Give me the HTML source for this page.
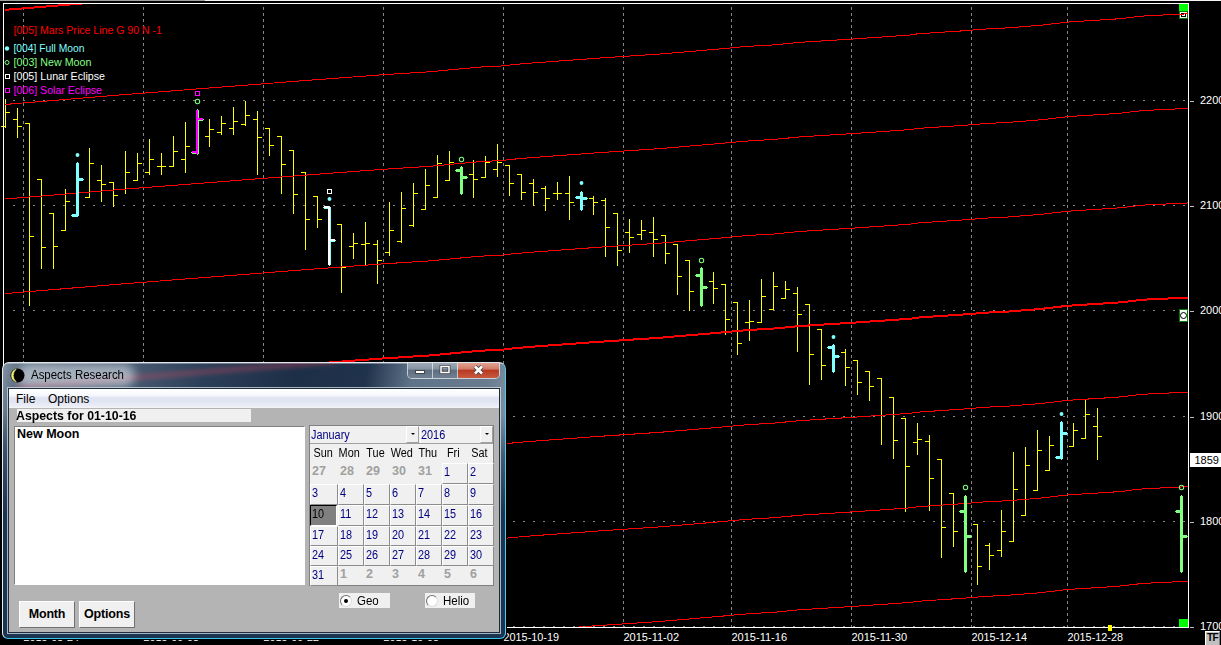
<!DOCTYPE html>
<html lang="en"><head><meta charset="utf-8"><title>Aspects Research</title>
<style>
html,body{margin:0;padding:0;background:#000;}
body{width:1221px;height:645px;overflow:hidden;position:relative;font-family:"Liberation Sans",sans-serif;}
#chart{position:absolute;left:0;top:0;}
#chart text.ax{font-family:"Liberation Sans",sans-serif;font-size:11px;fill:#fff;}
#tf{position:absolute;left:1205px;top:631px;width:15px;height:14px;background:#c0c0c0;box-sizing:border-box;border-top:1px solid #fff;border-left:1px solid #fff;border-right:1px solid #808080;font-size:10px;font-weight:bold;line-height:12px;color:#000;text-align:center;letter-spacing:-.6px;}
#win{position:absolute;left:2px;top:362px;width:504px;height:277px;box-sizing:border-box;border-radius:7px 7px 6px 6px;
 border:1px solid;border-color:#dfe6ee #55c8ee #35c6f2 #e8eef4;
 background:linear-gradient(180deg,rgba(27,52,80,0) 50px,rgba(27,52,80,.55) 90px,rgba(27,52,80,1) 150px),linear-gradient(100deg,#8595a6 0px,#5d6f83 14px,#4a5d74 120px,#2b3f58 200px,#1d2f47 290px,#20334c 360px,#5f7388 405px,#687b8f 480px,#8090a2 504px);overflow:hidden;box-shadow:1px 1px 0 #000;}
#win:before{content:"";position:absolute;left:0;top:0;right:0;height:1px;background:rgba(255,255,255,.35);}
#redglow{position:absolute;left:14px;top:22px;width:320px;height:4px;background:rgba(200,70,95,.5);filter:blur(2.5px);transform:rotate(-4.6deg);transform-origin:0 50%;}
#glow{position:absolute;left:14px;top:1px;width:118px;height:23px;border-radius:12px;background:rgba(235,240,246,.55);filter:blur(5px);}
#title{position:absolute;left:27.5px;top:5px;font-size:12px;line-height:15px;color:#000;white-space:nowrap;transform:scaleX(.955);transform-origin:0 0;}
#ico{position:absolute;left:7px;top:5px;width:15px;height:15px;}
#btns{position:absolute;left:404px;top:-1px;width:93px;height:17px;border:1px solid rgba(255,255,255,.65);border-top:none;border-radius:0 0 5px 5px;box-sizing:border-box;overflow:hidden;display:flex;}
#btns div{height:100%;box-sizing:border-box;position:relative;}
#bmin,#bmax{width:25px;background:linear-gradient(#a3adb8 0,#8592a1 45%,#5d6e80 50%,#6f8092 100%);border-right:1px solid rgba(255,255,255,.6);}
#bcls{width:42px;background:linear-gradient(#e3a898 0,#d27a68 45%,#b8381f 50%,#c65a40 100%);}
#client{position:absolute;left:5px;top:25px;width:492px;height:245px;background:#b4b4b4;border:1px solid #1f2c3a;box-sizing:border-box;box-shadow:0 0 0 1px rgba(214,224,234,.75);}
#client>div,#cal>div,.dh,.dc{position:absolute;}
#menu{left:0;top:0;width:490px;height:18px;background:linear-gradient(#ffffff 0,#f6f8fc 35%,#dfe3f1 50%,#e3e7f3 75%,#eef0f8 100%);border-bottom:1px solid #f4f4f4;font-size:12px;line-height:20px;color:#000;}
#menu span{position:absolute;top:0;}
.msb{font-weight:bold;font-size:12.5px;color:#000;white-space:nowrap;}
#lbl{background:#f0f0f0;line-height:15px;}
#lbl b{transform:scaleX(.985);transform-origin:0 0;left:-1px !important;}
#lbl b,#list b{position:absolute;left:0;top:0;}
#list{background:#fff;box-sizing:border-box;border:1px solid;border-color:#808080 #fff #fff #808080;line-height:13px;}
#cal{background:#f0f0f0;box-sizing:border-box;border:1px solid #808080;}
.ms b{font-weight:normal;display:inline-block;transform:scaleX(.87);transform-origin:0 0;white-space:nowrap;}
.ms{font-size:12.5px;}
.cb{background:#f0f0f0;line-height:19px;color:#000080;box-sizing:border-box;}
.dd{box-sizing:border-box;border:1px solid;border-color:#fff #a0a0a0 #a0a0a0 #fff;background:#f0f0f0;}
.dd:after{content:"";position:absolute;left:4px;top:6px;border:2px solid transparent;border-top:2px solid #000;border-bottom:none;}
.dh{line-height:18px;color:#000;text-align:center;}
.dh b{transform-origin:50% 0 !important;}
.dc{box-sizing:border-box;line-height:17px;padding-left:1px;color:#000080;}
.dc.n{border:1px solid;border-color:#fff #8c8c8c #8c8c8c #fff;}
.dc.g{color:#a0a0a0;line-height:17px;padding-left:2px;}
.dc.g b{font-weight:bold;transform:none;letter-spacing:0px;}
.dc.s{background:#808080;color:#000;border:1px solid;border-color:#000 #fff #fff #000;}
.rb{background:#f0f0f0;line-height:17px;color:#000;}
.rb b{transform:scaleX(.92) !important;}
.rb i{position:absolute;left:1px;top:2px;width:12px;height:12px;border-radius:50%;background:#fff;box-sizing:border-box;border:1px solid;border-color:#707070 #dcdcdc #dcdcdc #707070;}
.rb i.on:after{content:"";position:absolute;left:3px;top:3px;width:4px;height:4px;border-radius:50%;background:#000;}
.rb b{position:absolute;left:18px;top:0;}
.btn{letter-spacing:-.2px;box-sizing:border-box;background:#f0f0f0;border:1px solid;border-color:#fff #707070 #707070 #fff;line-height:24px;text-align:center;}
</style></head><body>
<svg id="chart" width="1221" height="645" viewBox="0 0 1221 645" shape-rendering="crispEdges"><defs><clipPath id="cp"><rect x="4" y="4" width="1184" height="623"/></clipPath></defs><rect x="0" y="0" width="1221" height="645" fill="#000"/><rect x="0" y="0" width="205" height="1" fill="#a0a0a0"/><rect x="205" y="0" width="1016" height="1" fill="#f4f4f4"/><g clip-path="url(#cp)"><path d="M13 100.5H1188" stroke="#868686" stroke-width="1" stroke-dasharray="2 8" fill="none"/><path d="M13 205.5H1188" stroke="#868686" stroke-width="1" stroke-dasharray="2 8" fill="none"/><path d="M13 310.5H1188" stroke="#868686" stroke-width="1" stroke-dasharray="2 8" fill="none"/><path d="M13 416.5H1188" stroke="#868686" stroke-width="1" stroke-dasharray="2 8" fill="none"/><path d="M13 521.5H1188" stroke="#868686" stroke-width="1" stroke-dasharray="2 8" fill="none"/><path d="M13 626.5H1188" stroke="#868686" stroke-width="1" stroke-dasharray="2 8" fill="none"/><path d="M23.5 7V627" stroke="#868686" stroke-width="1" stroke-dasharray="3 3" fill="none"/><path d="M143.5 7V627" stroke="#868686" stroke-width="1" stroke-dasharray="3 3" fill="none"/><path d="M263.5 7V627" stroke="#868686" stroke-width="1" stroke-dasharray="3 3" fill="none"/><path d="M383.5 7V627" stroke="#868686" stroke-width="1" stroke-dasharray="3 3" fill="none"/><path d="M503.5 7V627" stroke="#868686" stroke-width="1" stroke-dasharray="3 3" fill="none"/><path d="M623.5 7V627" stroke="#868686" stroke-width="1" stroke-dasharray="3 3" fill="none"/><path d="M731.5 7V627" stroke="#868686" stroke-width="1" stroke-dasharray="3 3" fill="none"/><path d="M851.5 7V627" stroke="#868686" stroke-width="1" stroke-dasharray="3 3" fill="none"/><path d="M971.5 7V627" stroke="#868686" stroke-width="1" stroke-dasharray="3 3" fill="none"/><path d="M1067.5 7V627" stroke="#868686" stroke-width="1" stroke-dasharray="3 3" fill="none"/></g><g clip-path="url(#cp)"><rect x="5" y="99" width="1" height="29" fill="#ffff00"/><rect x="1" y="126" width="4" height="1" fill="#ffff00"/><rect x="6" y="112" width="4" height="1" fill="#ffff00"/><rect x="17" y="108" width="1" height="30" fill="#ffff00"/><rect x="13" y="119" width="4" height="1" fill="#ffff00"/><rect x="18" y="126" width="4" height="1" fill="#ffff00"/><rect x="29" y="123" width="1" height="183" fill="#ffff00"/><rect x="25" y="123" width="4" height="1" fill="#ffff00"/><rect x="30" y="236" width="4" height="1" fill="#ffff00"/><rect x="41" y="179" width="1" height="90" fill="#ffff00"/><rect x="37" y="179" width="4" height="1" fill="#ffff00"/><rect x="42" y="247" width="4" height="1" fill="#ffff00"/><rect x="53" y="213" width="1" height="56" fill="#ffff00"/><rect x="49" y="213" width="4" height="1" fill="#ffff00"/><rect x="54" y="246" width="4" height="1" fill="#ffff00"/><rect x="65" y="189" width="1" height="42" fill="#ffff00"/><rect x="61" y="230" width="4" height="1" fill="#ffff00"/><rect x="66" y="201" width="4" height="1" fill="#ffff00"/><rect x="89" y="148" width="1" height="50" fill="#ffff00"/><rect x="85" y="197" width="4" height="1" fill="#ffff00"/><rect x="90" y="163" width="4" height="1" fill="#ffff00"/><rect x="101" y="165" width="1" height="37" fill="#ffff00"/><rect x="97" y="180" width="4" height="1" fill="#ffff00"/><rect x="102" y="184" width="4" height="1" fill="#ffff00"/><rect x="113" y="182" width="1" height="25" fill="#ffff00"/><rect x="109" y="182" width="4" height="1" fill="#ffff00"/><rect x="114" y="195" width="4" height="1" fill="#ffff00"/><rect x="125" y="151" width="1" height="43" fill="#ffff00"/><rect x="121" y="189" width="4" height="1" fill="#ffff00"/><rect x="126" y="172" width="4" height="1" fill="#ffff00"/><rect x="137" y="153" width="1" height="28" fill="#ffff00"/><rect x="133" y="180" width="4" height="1" fill="#ffff00"/><rect x="138" y="163" width="4" height="1" fill="#ffff00"/><rect x="149" y="139" width="1" height="36" fill="#ffff00"/><rect x="145" y="172" width="4" height="1" fill="#ffff00"/><rect x="150" y="159" width="4" height="1" fill="#ffff00"/><rect x="161" y="153" width="1" height="22" fill="#ffff00"/><rect x="157" y="166" width="4" height="1" fill="#ffff00"/><rect x="162" y="166" width="4" height="1" fill="#ffff00"/><rect x="173" y="136" width="1" height="31" fill="#ffff00"/><rect x="169" y="166" width="4" height="1" fill="#ffff00"/><rect x="174" y="151" width="4" height="1" fill="#ffff00"/><rect x="185" y="122" width="1" height="51" fill="#ffff00"/><rect x="181" y="159" width="4" height="1" fill="#ffff00"/><rect x="186" y="146" width="4" height="1" fill="#ffff00"/><rect x="209" y="119" width="1" height="28" fill="#ffff00"/><rect x="205" y="136" width="4" height="1" fill="#ffff00"/><rect x="210" y="129" width="4" height="1" fill="#ffff00"/><rect x="221" y="116" width="1" height="19" fill="#ffff00"/><rect x="217" y="132" width="4" height="1" fill="#ffff00"/><rect x="222" y="123" width="4" height="1" fill="#ffff00"/><rect x="233" y="107" width="1" height="28" fill="#ffff00"/><rect x="229" y="128" width="4" height="1" fill="#ffff00"/><rect x="234" y="121" width="4" height="1" fill="#ffff00"/><rect x="245" y="101" width="1" height="25" fill="#ffff00"/><rect x="241" y="124" width="4" height="1" fill="#ffff00"/><rect x="246" y="115" width="4" height="1" fill="#ffff00"/><rect x="257" y="111" width="1" height="64" fill="#ffff00"/><rect x="253" y="119" width="4" height="1" fill="#ffff00"/><rect x="258" y="137" width="4" height="1" fill="#ffff00"/><rect x="269" y="128" width="1" height="28" fill="#ffff00"/><rect x="265" y="128" width="4" height="1" fill="#ffff00"/><rect x="270" y="145" width="4" height="1" fill="#ffff00"/><rect x="281" y="136" width="1" height="58" fill="#ffff00"/><rect x="277" y="136" width="4" height="1" fill="#ffff00"/><rect x="282" y="164" width="4" height="1" fill="#ffff00"/><rect x="293" y="150" width="1" height="64" fill="#ffff00"/><rect x="289" y="150" width="4" height="1" fill="#ffff00"/><rect x="294" y="194" width="4" height="1" fill="#ffff00"/><rect x="305" y="172" width="1" height="78" fill="#ffff00"/><rect x="301" y="172" width="4" height="1" fill="#ffff00"/><rect x="306" y="219" width="4" height="1" fill="#ffff00"/><rect x="317" y="196" width="1" height="32" fill="#ffff00"/><rect x="313" y="196" width="4" height="1" fill="#ffff00"/><rect x="318" y="219" width="4" height="1" fill="#ffff00"/><rect x="341" y="224" width="1" height="69" fill="#ffff00"/><rect x="337" y="224" width="4" height="1" fill="#ffff00"/><rect x="342" y="267" width="4" height="1" fill="#ffff00"/><rect x="353" y="233" width="1" height="26" fill="#ffff00"/><rect x="349" y="246" width="4" height="1" fill="#ffff00"/><rect x="354" y="243" width="4" height="1" fill="#ffff00"/><rect x="365" y="222" width="1" height="44" fill="#ffff00"/><rect x="361" y="244" width="4" height="1" fill="#ffff00"/><rect x="366" y="243" width="4" height="1" fill="#ffff00"/><rect x="377" y="240" width="1" height="44" fill="#ffff00"/><rect x="373" y="244" width="4" height="1" fill="#ffff00"/><rect x="378" y="260" width="4" height="1" fill="#ffff00"/><rect x="389" y="202" width="1" height="54" fill="#ffff00"/><rect x="385" y="252" width="4" height="1" fill="#ffff00"/><rect x="390" y="230" width="4" height="1" fill="#ffff00"/><rect x="401" y="192" width="1" height="51" fill="#ffff00"/><rect x="397" y="241" width="4" height="1" fill="#ffff00"/><rect x="402" y="208" width="4" height="1" fill="#ffff00"/><rect x="413" y="183" width="1" height="44" fill="#ffff00"/><rect x="409" y="225" width="4" height="1" fill="#ffff00"/><rect x="414" y="193" width="4" height="1" fill="#ffff00"/><rect x="425" y="169" width="1" height="41" fill="#ffff00"/><rect x="421" y="209" width="4" height="1" fill="#ffff00"/><rect x="426" y="185" width="4" height="1" fill="#ffff00"/><rect x="437" y="155" width="1" height="43" fill="#ffff00"/><rect x="433" y="197" width="4" height="1" fill="#ffff00"/><rect x="438" y="163" width="4" height="1" fill="#ffff00"/><rect x="449" y="151" width="1" height="30" fill="#ffff00"/><rect x="445" y="180" width="4" height="1" fill="#ffff00"/><rect x="450" y="162" width="4" height="1" fill="#ffff00"/><rect x="473" y="160" width="1" height="38" fill="#ffff00"/><rect x="469" y="174" width="4" height="1" fill="#ffff00"/><rect x="474" y="179" width="4" height="1" fill="#ffff00"/><rect x="485" y="156" width="1" height="22" fill="#ffff00"/><rect x="481" y="177" width="4" height="1" fill="#ffff00"/><rect x="486" y="162" width="4" height="1" fill="#ffff00"/><rect x="497" y="144" width="1" height="33" fill="#ffff00"/><rect x="493" y="169" width="4" height="1" fill="#ffff00"/><rect x="498" y="162" width="4" height="1" fill="#ffff00"/><rect x="509" y="165" width="1" height="31" fill="#ffff00"/><rect x="505" y="165" width="4" height="1" fill="#ffff00"/><rect x="510" y="183" width="4" height="1" fill="#ffff00"/><rect x="521" y="174" width="1" height="26" fill="#ffff00"/><rect x="517" y="174" width="4" height="1" fill="#ffff00"/><rect x="522" y="192" width="4" height="1" fill="#ffff00"/><rect x="533" y="179" width="1" height="27" fill="#ffff00"/><rect x="529" y="183" width="4" height="1" fill="#ffff00"/><rect x="534" y="192" width="4" height="1" fill="#ffff00"/><rect x="545" y="186" width="1" height="25" fill="#ffff00"/><rect x="541" y="188" width="4" height="1" fill="#ffff00"/><rect x="546" y="198" width="4" height="1" fill="#ffff00"/><rect x="557" y="182" width="1" height="18" fill="#ffff00"/><rect x="553" y="193" width="4" height="1" fill="#ffff00"/><rect x="558" y="193" width="4" height="1" fill="#ffff00"/><rect x="569" y="176" width="1" height="44" fill="#ffff00"/><rect x="565" y="193" width="4" height="1" fill="#ffff00"/><rect x="570" y="202" width="4" height="1" fill="#ffff00"/><rect x="593" y="196" width="1" height="19" fill="#ffff00"/><rect x="589" y="198" width="4" height="1" fill="#ffff00"/><rect x="594" y="202" width="4" height="1" fill="#ffff00"/><rect x="605" y="198" width="1" height="59" fill="#ffff00"/><rect x="601" y="200" width="4" height="1" fill="#ffff00"/><rect x="606" y="227" width="4" height="1" fill="#ffff00"/><rect x="617" y="213" width="1" height="53" fill="#ffff00"/><rect x="613" y="213" width="4" height="1" fill="#ffff00"/><rect x="618" y="250" width="4" height="1" fill="#ffff00"/><rect x="629" y="219" width="1" height="34" fill="#ffff00"/><rect x="625" y="232" width="4" height="1" fill="#ffff00"/><rect x="630" y="237" width="4" height="1" fill="#ffff00"/><rect x="641" y="220" width="1" height="20" fill="#ffff00"/><rect x="637" y="234" width="4" height="1" fill="#ffff00"/><rect x="642" y="230" width="4" height="1" fill="#ffff00"/><rect x="653" y="217" width="1" height="40" fill="#ffff00"/><rect x="649" y="232" width="4" height="1" fill="#ffff00"/><rect x="654" y="239" width="4" height="1" fill="#ffff00"/><rect x="665" y="235" width="1" height="29" fill="#ffff00"/><rect x="661" y="235" width="4" height="1" fill="#ffff00"/><rect x="666" y="253" width="4" height="1" fill="#ffff00"/><rect x="677" y="244" width="1" height="51" fill="#ffff00"/><rect x="673" y="244" width="4" height="1" fill="#ffff00"/><rect x="678" y="276" width="4" height="1" fill="#ffff00"/><rect x="689" y="260" width="1" height="51" fill="#ffff00"/><rect x="685" y="260" width="4" height="1" fill="#ffff00"/><rect x="690" y="291" width="4" height="1" fill="#ffff00"/><rect x="713" y="272" width="1" height="32" fill="#ffff00"/><rect x="709" y="281" width="4" height="1" fill="#ffff00"/><rect x="714" y="288" width="4" height="1" fill="#ffff00"/><rect x="725" y="284" width="1" height="51" fill="#ffff00"/><rect x="721" y="284" width="4" height="1" fill="#ffff00"/><rect x="726" y="319" width="4" height="1" fill="#ffff00"/><rect x="737" y="302" width="1" height="53" fill="#ffff00"/><rect x="733" y="302" width="4" height="1" fill="#ffff00"/><rect x="738" y="343" width="4" height="1" fill="#ffff00"/><rect x="749" y="300" width="1" height="41" fill="#ffff00"/><rect x="745" y="322" width="4" height="1" fill="#ffff00"/><rect x="750" y="321" width="4" height="1" fill="#ffff00"/><rect x="761" y="279" width="1" height="44" fill="#ffff00"/><rect x="757" y="322" width="4" height="1" fill="#ffff00"/><rect x="762" y="296" width="4" height="1" fill="#ffff00"/><rect x="773" y="272" width="1" height="38" fill="#ffff00"/><rect x="769" y="309" width="4" height="1" fill="#ffff00"/><rect x="774" y="286" width="4" height="1" fill="#ffff00"/><rect x="785" y="281" width="1" height="18" fill="#ffff00"/><rect x="781" y="298" width="4" height="1" fill="#ffff00"/><rect x="786" y="289" width="4" height="1" fill="#ffff00"/><rect x="797" y="287" width="1" height="65" fill="#ffff00"/><rect x="793" y="293" width="4" height="1" fill="#ffff00"/><rect x="798" y="314" width="4" height="1" fill="#ffff00"/><rect x="809" y="304" width="1" height="81" fill="#ffff00"/><rect x="805" y="304" width="4" height="1" fill="#ffff00"/><rect x="810" y="354" width="4" height="1" fill="#ffff00"/><rect x="821" y="329" width="1" height="51" fill="#ffff00"/><rect x="817" y="329" width="4" height="1" fill="#ffff00"/><rect x="822" y="365" width="4" height="1" fill="#ffff00"/><rect x="845" y="349" width="1" height="37" fill="#ffff00"/><rect x="841" y="352" width="4" height="1" fill="#ffff00"/><rect x="846" y="367" width="4" height="1" fill="#ffff00"/><rect x="857" y="360" width="1" height="35" fill="#ffff00"/><rect x="853" y="360" width="4" height="1" fill="#ffff00"/><rect x="858" y="382" width="4" height="1" fill="#ffff00"/><rect x="869" y="371" width="1" height="30" fill="#ffff00"/><rect x="865" y="371" width="4" height="1" fill="#ffff00"/><rect x="870" y="386" width="4" height="1" fill="#ffff00"/><rect x="881" y="378" width="1" height="67" fill="#ffff00"/><rect x="877" y="378" width="4" height="1" fill="#ffff00"/><rect x="882" y="415" width="4" height="1" fill="#ffff00"/><rect x="893" y="397" width="1" height="62" fill="#ffff00"/><rect x="889" y="397" width="4" height="1" fill="#ffff00"/><rect x="894" y="440" width="4" height="1" fill="#ffff00"/><rect x="905" y="418" width="1" height="94" fill="#ffff00"/><rect x="901" y="418" width="4" height="1" fill="#ffff00"/><rect x="906" y="466" width="4" height="1" fill="#ffff00"/><rect x="917" y="423" width="1" height="32" fill="#ffff00"/><rect x="913" y="442" width="4" height="1" fill="#ffff00"/><rect x="918" y="439" width="4" height="1" fill="#ffff00"/><rect x="929" y="435" width="1" height="76" fill="#ffff00"/><rect x="925" y="441" width="4" height="1" fill="#ffff00"/><rect x="930" y="478" width="4" height="1" fill="#ffff00"/><rect x="941" y="459" width="1" height="99" fill="#ffff00"/><rect x="937" y="459" width="4" height="1" fill="#ffff00"/><rect x="942" y="527" width="4" height="1" fill="#ffff00"/><rect x="953" y="493" width="1" height="54" fill="#ffff00"/><rect x="949" y="493" width="4" height="1" fill="#ffff00"/><rect x="954" y="531" width="4" height="1" fill="#ffff00"/><rect x="977" y="524" width="1" height="61" fill="#ffff00"/><rect x="973" y="524" width="4" height="1" fill="#ffff00"/><rect x="978" y="566" width="4" height="1" fill="#ffff00"/><rect x="989" y="543" width="1" height="27" fill="#ffff00"/><rect x="985" y="545" width="4" height="1" fill="#ffff00"/><rect x="990" y="555" width="4" height="1" fill="#ffff00"/><rect x="1001" y="510" width="1" height="47" fill="#ffff00"/><rect x="997" y="550" width="4" height="1" fill="#ffff00"/><rect x="1002" y="531" width="4" height="1" fill="#ffff00"/><rect x="1013" y="452" width="1" height="90" fill="#ffff00"/><rect x="1009" y="541" width="4" height="1" fill="#ffff00"/><rect x="1014" y="489" width="4" height="1" fill="#ffff00"/><rect x="1025" y="447" width="1" height="69" fill="#ffff00"/><rect x="1021" y="515" width="4" height="1" fill="#ffff00"/><rect x="1026" y="465" width="4" height="1" fill="#ffff00"/><rect x="1037" y="430" width="1" height="61" fill="#ffff00"/><rect x="1033" y="490" width="4" height="1" fill="#ffff00"/><rect x="1038" y="450" width="4" height="1" fill="#ffff00"/><rect x="1049" y="436" width="1" height="35" fill="#ffff00"/><rect x="1045" y="470" width="4" height="1" fill="#ffff00"/><rect x="1050" y="445" width="4" height="1" fill="#ffff00"/><rect x="1073" y="423" width="1" height="24" fill="#ffff00"/><rect x="1069" y="446" width="4" height="1" fill="#ffff00"/><rect x="1074" y="430" width="4" height="1" fill="#ffff00"/><rect x="1085" y="399" width="1" height="40" fill="#ffff00"/><rect x="1081" y="438" width="4" height="1" fill="#ffff00"/><rect x="1086" y="414" width="4" height="1" fill="#ffff00"/><rect x="1097" y="408" width="1" height="52" fill="#ffff00"/><rect x="1093" y="426" width="4" height="1" fill="#ffff00"/><rect x="1098" y="436" width="4" height="1" fill="#ffff00"/></g><rect x="1" y="126" width="4" height="1" fill="#ffff00"/><rect x="1179" y="4" width="9" height="7" fill="#00ff00"/><rect x="1179" y="11" width="9" height="8" fill="#008000"/><rect x="1180" y="12" width="7" height="6" fill="#fff"/><rect x="1181" y="13" width="5" height="4" fill="#000"/><rect x="1182" y="14" width="3" height="2" fill="#fff"/><g clip-path="url(#cp)"><path d="M5 9.81 L11 9.40 L17 8.90 L23 8.40 L29 7.90 L35 7.41 L41 6.91 L47 6.41 L53 5.91 L59 5.42 L65 4.92 L71 4.42 L77 3.92 L83 3.43 L89 2.93 L95 2.43 L101 1.94 L107 1.44 L113 0.94 L119 0.44 L125 -0.03 L131 -0.49 L137 -0.96 L143 -1.42 L149 -1.89 L155 -2.35 L161 -2.82 L167 -3.28 L173 -3.75 L179 -4.21 L185 -4.68 L191 -5.14 L197 -5.61 L203 -6.07 L209 -6.54 L215 -7.00 L221 -7.47 L227 -7.93 L233 -8.40 L239 -8.86 L245 -9.33 L251 -9.80 L257 -10.27 L263 -10.74 L269 -11.21 L275 -11.68 L281 -12.15 L287 -12.62 L293 -13.09 L299 -13.56 L305 -14.01 L311 -14.46 L317 -14.91 L323 -15.36 L329 -15.81 L335 -16.25 L341 -16.70 L347 -17.15 L353 -17.60 L359 -18.05 L365 -18.50 L371 -18.94 L377 -19.39 L383 -19.84 L389 -20.22 L395 -20.61 L401 -20.99 L407 -21.37 L413 -21.75 L419 -22.14 L425 -22.52 L431 -22.93 L437 -23.50 L443 -24.06 L449 -24.63 L455 -25.19 L461 -25.75 L467 -26.32 L473 -26.88 L479 -27.45 L485 -27.78 L491 -28.07 L497 -28.35 L503 -28.64 L509 -29.50 L515 -30.09 L521 -30.64 L527 -31.14 L533 -31.64 L539 -32.08 L545 -32.52 L551 -32.96 L557 -33.40 L563 -33.83 L569 -34.27 L575 -34.71 L581 -35.15 L587 -35.59 L593 -36.03 L599 -36.47 L605 -36.87 L611 -37.27 L617 -37.67 L623 -38.07 L629 -38.47 L635 -38.87 L641 -39.27 L647 -39.67 L653 -40.07 L659 -40.47 L665 -40.97 L671 -41.47 L677 -41.98 L683 -42.49 L689 -43.00 L695 -43.51 L701 -44.02 L707 -44.53 L713 -45.04 L719 -45.55 L725 -46.12 L731 -46.69 L737 -47.26 L743 -47.78 L749 -48.21 L755 -48.64 L761 -48.97 L767 -49.31 L773 -49.64 L779 -50.22 L785 -50.80 L791 -51.37 L797 -51.95 L803 -52.43 L809 -52.80 L815 -53.18 L821 -53.56 L827 -53.93 L833 -54.31 L839 -54.69 L845 -55.06 L851 -55.44 L857 -55.85 L863 -56.26 L869 -56.68 L875 -57.09 L881 -57.50 L887 -57.93 L893 -58.35 L899 -58.78 L905 -59.21 L911 -59.64 L917 -60.64 L923 -61.05 L929 -61.47 L935 -61.88 L941 -62.30 L947 -62.70 L953 -63.08 L959 -63.45 L965 -63.89 L971 -64.39 L977 -64.89 L983 -65.39 L989 -65.78 L995 -66.07 L1001 -66.35 L1007 -66.64 L1013 -67.11 L1019 -67.59 L1025 -68.06 L1031 -68.53 L1037 -69.00 L1043 -69.59 L1049 -70.30 L1055 -71.01 L1061 -71.71 L1067 -72.42 L1073 -72.86 L1079 -73.24 L1085 -73.62 L1091 -74.00 L1097 -74.37 L1103 -74.75 L1109 -75.13 L1115 -75.51 L1121 -76.04 L1127 -76.64 L1133 -77.50 L1139 -78.14 L1145 -78.69 L1151 -78.97 L1157 -79.26 L1163 -79.55 L1169 -79.83 L1175 -80.12 L1181 -80.41 L1187 -80.69 L1188 -80.74" fill="none" stroke="#ff0000" stroke-width="2"/><path d="M5 104.38 L11 103.97 L17 103.47 L23 102.97 L29 102.47 L35 101.98 L41 101.48 L47 100.98 L53 100.48 L59 99.99 L65 99.49 L71 98.99 L77 98.49 L83 98.00 L89 97.50 L95 97.00 L101 96.50 L107 96.01 L113 95.51 L119 95.01 L125 94.54 L131 94.08 L137 93.61 L143 93.15 L149 92.68 L155 92.22 L161 91.75 L167 91.29 L173 90.82 L179 90.36 L185 89.89 L191 89.43 L197 88.96 L203 88.50 L209 88.03 L215 87.57 L221 87.10 L227 86.64 L233 86.17 L239 85.71 L245 85.24 L251 84.77 L257 84.30 L263 83.83 L269 83.36 L275 82.89 L281 82.42 L287 81.95 L293 81.48 L299 81.01 L305 80.56 L311 80.11 L317 79.66 L323 79.21 L329 78.76 L335 78.32 L341 77.87 L347 77.42 L353 76.97 L359 76.52 L365 76.07 L371 75.63 L377 75.18 L383 74.73 L389 74.35 L395 73.96 L401 73.58 L407 73.20 L413 72.82 L419 72.43 L425 72.05 L431 71.64 L437 71.07 L443 70.51 L449 69.94 L455 69.38 L461 68.82 L467 68.25 L473 67.69 L479 67.12 L485 66.79 L491 66.50 L497 66.22 L503 65.93 L509 65.07 L515 64.48 L521 63.93 L527 63.43 L533 62.93 L539 62.49 L545 62.05 L551 61.61 L557 61.17 L563 60.74 L569 60.30 L575 59.86 L581 59.42 L587 58.98 L593 58.54 L599 58.10 L605 57.70 L611 57.30 L617 56.90 L623 56.50 L629 56.10 L635 55.70 L641 55.30 L647 54.90 L653 54.50 L659 54.10 L665 53.60 L671 53.09 L677 52.59 L683 52.08 L689 51.56 L695 51.06 L701 50.55 L707 50.03 L713 49.53 L719 49.02 L725 48.45 L731 47.88 L737 47.31 L743 46.79 L749 46.36 L755 45.93 L761 45.60 L767 45.26 L773 44.93 L779 44.35 L785 43.77 L791 43.20 L797 42.62 L803 42.14 L809 41.77 L815 41.39 L821 41.01 L827 40.64 L833 40.26 L839 39.88 L845 39.51 L851 39.13 L857 38.72 L863 38.31 L869 37.89 L875 37.48 L881 37.07 L887 36.64 L893 36.22 L899 35.79 L905 35.36 L911 34.93 L917 33.93 L923 33.52 L929 33.10 L935 32.69 L941 32.27 L947 31.87 L953 31.49 L959 31.12 L965 30.68 L971 30.18 L977 29.68 L983 29.18 L989 28.79 L995 28.50 L1001 28.22 L1007 27.93 L1013 27.46 L1019 26.98 L1025 26.51 L1031 26.04 L1037 25.57 L1043 24.98 L1049 24.27 L1055 23.56 L1061 22.86 L1067 22.15 L1073 21.71 L1079 21.33 L1085 20.95 L1091 20.57 L1097 20.20 L1103 19.82 L1109 19.44 L1115 19.06 L1121 18.53 L1127 17.93 L1133 17.07 L1139 16.43 L1145 15.88 L1151 15.60 L1157 15.31 L1163 15.02 L1169 14.74 L1175 14.45 L1181 14.16 L1187 13.88 L1188 13.83" fill="none" stroke="#ff0000" stroke-width="1"/><path d="M5 198.95 L11 198.54 L17 198.04 L23 197.54 L29 197.04 L35 196.55 L41 196.05 L47 195.55 L53 195.05 L59 194.56 L65 194.06 L71 193.56 L77 193.06 L83 192.57 L89 192.07 L95 191.57 L101 191.07 L107 190.58 L113 190.08 L119 189.58 L125 189.11 L131 188.65 L137 188.18 L143 187.72 L149 187.25 L155 186.79 L161 186.32 L167 185.86 L173 185.39 L179 184.93 L185 184.46 L191 184.00 L197 183.53 L203 183.07 L209 182.60 L215 182.14 L221 181.67 L227 181.21 L233 180.74 L239 180.28 L245 179.81 L251 179.34 L257 178.87 L263 178.40 L269 177.93 L275 177.46 L281 176.99 L287 176.52 L293 176.05 L299 175.58 L305 175.13 L311 174.68 L317 174.23 L323 173.78 L329 173.33 L335 172.89 L341 172.44 L347 171.99 L353 171.54 L359 171.09 L365 170.64 L371 170.20 L377 169.75 L383 169.30 L389 168.92 L395 168.53 L401 168.15 L407 167.77 L413 167.39 L419 167.00 L425 166.62 L431 166.21 L437 165.64 L443 165.08 L449 164.51 L455 163.95 L461 163.39 L467 162.82 L473 162.26 L479 161.69 L485 161.36 L491 161.07 L497 160.79 L503 160.50 L509 159.64 L515 159.05 L521 158.50 L527 158.00 L533 157.50 L539 157.06 L545 156.62 L551 156.18 L557 155.74 L563 155.31 L569 154.87 L575 154.43 L581 153.99 L587 153.55 L593 153.11 L599 152.67 L605 152.27 L611 151.87 L617 151.47 L623 151.07 L629 150.67 L635 150.27 L641 149.87 L647 149.47 L653 149.07 L659 148.67 L665 148.17 L671 147.66 L677 147.16 L683 146.65 L689 146.13 L695 145.62 L701 145.12 L707 144.60 L713 144.09 L719 143.59 L725 143.02 L731 142.45 L737 141.88 L743 141.36 L749 140.93 L755 140.50 L761 140.17 L767 139.83 L773 139.50 L779 138.92 L785 138.34 L791 137.77 L797 137.19 L803 136.71 L809 136.34 L815 135.96 L821 135.58 L827 135.21 L833 134.83 L839 134.45 L845 134.08 L851 133.70 L857 133.29 L863 132.88 L869 132.46 L875 132.05 L881 131.64 L887 131.21 L893 130.79 L899 130.36 L905 129.93 L911 129.50 L917 128.50 L923 128.09 L929 127.67 L935 127.26 L941 126.84 L947 126.44 L953 126.06 L959 125.69 L965 125.25 L971 124.75 L977 124.25 L983 123.75 L989 123.36 L995 123.07 L1001 122.79 L1007 122.50 L1013 122.03 L1019 121.55 L1025 121.08 L1031 120.61 L1037 120.14 L1043 119.55 L1049 118.84 L1055 118.13 L1061 117.42 L1067 116.72 L1073 116.28 L1079 115.90 L1085 115.52 L1091 115.14 L1097 114.77 L1103 114.39 L1109 114.01 L1115 113.63 L1121 113.10 L1127 112.50 L1133 111.64 L1139 111.00 L1145 110.45 L1151 110.17 L1157 109.88 L1163 109.59 L1169 109.31 L1175 109.02 L1181 108.73 L1187 108.45 L1188 108.40" fill="none" stroke="#ff0000" stroke-width="1"/><path d="M5 293.52 L11 293.11 L17 292.61 L23 292.11 L29 291.61 L35 291.12 L41 290.62 L47 290.12 L53 289.62 L59 289.13 L65 288.63 L71 288.13 L77 287.63 L83 287.14 L89 286.64 L95 286.14 L101 285.64 L107 285.15 L113 284.65 L119 284.15 L125 283.68 L131 283.22 L137 282.75 L143 282.29 L149 281.82 L155 281.36 L161 280.89 L167 280.43 L173 279.96 L179 279.50 L185 279.03 L191 278.57 L197 278.10 L203 277.64 L209 277.17 L215 276.71 L221 276.24 L227 275.78 L233 275.31 L239 274.85 L245 274.38 L251 273.91 L257 273.44 L263 272.97 L269 272.50 L275 272.03 L281 271.56 L287 271.09 L293 270.62 L299 270.15 L305 269.70 L311 269.25 L317 268.80 L323 268.35 L329 267.90 L335 267.46 L341 267.01 L347 266.56 L353 266.11 L359 265.66 L365 265.21 L371 264.77 L377 264.32 L383 263.87 L389 263.49 L395 263.10 L401 262.72 L407 262.34 L413 261.96 L419 261.57 L425 261.19 L431 260.78 L437 260.21 L443 259.65 L449 259.08 L455 258.52 L461 257.96 L467 257.39 L473 256.83 L479 256.26 L485 255.93 L491 255.64 L497 255.36 L503 255.07 L509 254.21 L515 253.62 L521 253.07 L527 252.57 L533 252.07 L539 251.63 L545 251.19 L551 250.75 L557 250.31 L563 249.88 L569 249.44 L575 249.00 L581 248.56 L587 248.12 L593 247.68 L599 247.24 L605 246.84 L611 246.44 L617 246.04 L623 245.64 L629 245.24 L635 244.84 L641 244.44 L647 244.04 L653 243.64 L659 243.24 L665 242.74 L671 242.23 L677 241.72 L683 241.22 L689 240.70 L695 240.19 L701 239.69 L707 239.17 L713 238.66 L719 238.16 L725 237.59 L731 237.02 L737 236.45 L743 235.93 L749 235.50 L755 235.07 L761 234.74 L767 234.40 L773 234.07 L779 233.49 L785 232.91 L791 232.34 L797 231.76 L803 231.28 L809 230.91 L815 230.53 L821 230.15 L827 229.78 L833 229.40 L839 229.02 L845 228.65 L851 228.27 L857 227.86 L863 227.44 L869 227.03 L875 226.62 L881 226.21 L887 225.78 L893 225.36 L899 224.93 L905 224.50 L911 224.07 L917 223.07 L923 222.66 L929 222.24 L935 221.83 L941 221.41 L947 221.01 L953 220.63 L959 220.26 L965 219.82 L971 219.32 L977 218.82 L983 218.32 L989 217.93 L995 217.64 L1001 217.36 L1007 217.07 L1013 216.60 L1019 216.12 L1025 215.65 L1031 215.18 L1037 214.71 L1043 214.12 L1049 213.41 L1055 212.70 L1061 212.00 L1067 211.29 L1073 210.85 L1079 210.47 L1085 210.09 L1091 209.71 L1097 209.34 L1103 208.96 L1109 208.58 L1115 208.20 L1121 207.67 L1127 207.07 L1133 206.21 L1139 205.57 L1145 205.02 L1151 204.74 L1157 204.45 L1163 204.16 L1169 203.88 L1175 203.59 L1181 203.30 L1187 203.02 L1188 202.97" fill="none" stroke="#ff0000" stroke-width="1"/><path d="M5 388.09 L11 387.68 L17 387.18 L23 386.68 L29 386.18 L35 385.69 L41 385.19 L47 384.69 L53 384.19 L59 383.70 L65 383.20 L71 382.70 L77 382.20 L83 381.71 L89 381.21 L95 380.71 L101 380.21 L107 379.72 L113 379.22 L119 378.72 L125 378.25 L131 377.79 L137 377.32 L143 376.86 L149 376.39 L155 375.93 L161 375.46 L167 375.00 L173 374.53 L179 374.07 L185 373.60 L191 373.14 L197 372.67 L203 372.21 L209 371.74 L215 371.28 L221 370.81 L227 370.35 L233 369.88 L239 369.42 L245 368.95 L251 368.48 L257 368.01 L263 367.54 L269 367.07 L275 366.60 L281 366.13 L287 365.66 L293 365.19 L299 364.72 L305 364.27 L311 363.82 L317 363.37 L323 362.92 L329 362.47 L335 362.03 L341 361.58 L347 361.13 L353 360.68 L359 360.23 L365 359.78 L371 359.34 L377 358.89 L383 358.44 L389 358.06 L395 357.67 L401 357.29 L407 356.91 L413 356.53 L419 356.14 L425 355.76 L431 355.35 L437 354.78 L443 354.22 L449 353.65 L455 353.09 L461 352.53 L467 351.96 L473 351.40 L479 350.83 L485 350.50 L491 350.21 L497 349.93 L503 349.64 L509 348.78 L515 348.19 L521 347.64 L527 347.14 L533 346.64 L539 346.20 L545 345.76 L551 345.32 L557 344.88 L563 344.45 L569 344.01 L575 343.57 L581 343.13 L587 342.69 L593 342.25 L599 341.81 L605 341.41 L611 341.01 L617 340.61 L623 340.21 L629 339.81 L635 339.41 L641 339.01 L647 338.61 L653 338.21 L659 337.81 L665 337.31 L671 336.80 L677 336.29 L683 335.78 L689 335.27 L695 334.76 L701 334.25 L707 333.75 L713 333.24 L719 332.73 L725 332.16 L731 331.59 L737 331.02 L743 330.50 L749 330.07 L755 329.64 L761 329.31 L767 328.97 L773 328.64 L779 328.06 L785 327.48 L791 326.91 L797 326.33 L803 325.85 L809 325.48 L815 325.10 L821 324.72 L827 324.35 L833 323.97 L839 323.59 L845 323.22 L851 322.84 L857 322.43 L863 322.01 L869 321.60 L875 321.19 L881 320.78 L887 320.35 L893 319.93 L899 319.50 L905 319.07 L911 318.64 L917 317.64 L923 317.23 L929 316.81 L935 316.40 L941 315.98 L947 315.58 L953 315.20 L959 314.83 L965 314.39 L971 313.89 L977 313.39 L983 312.89 L989 312.50 L995 312.21 L1001 311.93 L1007 311.64 L1013 311.17 L1019 310.69 L1025 310.22 L1031 309.75 L1037 309.28 L1043 308.69 L1049 307.98 L1055 307.27 L1061 306.56 L1067 305.86 L1073 305.42 L1079 305.04 L1085 304.66 L1091 304.28 L1097 303.91 L1103 303.53 L1109 303.15 L1115 302.77 L1121 302.24 L1127 301.64 L1133 300.78 L1139 300.14 L1145 299.59 L1151 299.31 L1157 299.02 L1163 298.73 L1169 298.45 L1175 298.16 L1181 297.87 L1187 297.59 L1188 297.54" fill="none" stroke="#ff0000" stroke-width="2"/><path d="M5 482.66 L11 482.25 L17 481.75 L23 481.25 L29 480.75 L35 480.26 L41 479.76 L47 479.26 L53 478.76 L59 478.27 L65 477.77 L71 477.27 L77 476.77 L83 476.28 L89 475.78 L95 475.28 L101 474.78 L107 474.29 L113 473.79 L119 473.29 L125 472.82 L131 472.36 L137 471.89 L143 471.43 L149 470.96 L155 470.50 L161 470.03 L167 469.57 L173 469.10 L179 468.64 L185 468.17 L191 467.71 L197 467.24 L203 466.78 L209 466.31 L215 465.85 L221 465.38 L227 464.92 L233 464.45 L239 463.99 L245 463.52 L251 463.05 L257 462.58 L263 462.11 L269 461.64 L275 461.17 L281 460.70 L287 460.23 L293 459.76 L299 459.29 L305 458.84 L311 458.39 L317 457.94 L323 457.49 L329 457.04 L335 456.60 L341 456.15 L347 455.70 L353 455.25 L359 454.80 L365 454.35 L371 453.91 L377 453.46 L383 453.01 L389 452.63 L395 452.24 L401 451.86 L407 451.48 L413 451.10 L419 450.71 L425 450.33 L431 449.92 L437 449.35 L443 448.79 L449 448.22 L455 447.66 L461 447.10 L467 446.53 L473 445.97 L479 445.40 L485 445.07 L491 444.78 L497 444.50 L503 444.21 L509 443.35 L515 442.76 L521 442.21 L527 441.71 L533 441.21 L539 440.77 L545 440.33 L551 439.89 L557 439.45 L563 439.02 L569 438.58 L575 438.14 L581 437.70 L587 437.26 L593 436.82 L599 436.38 L605 435.98 L611 435.58 L617 435.18 L623 434.78 L629 434.38 L635 433.98 L641 433.58 L647 433.18 L653 432.78 L659 432.38 L665 431.88 L671 431.38 L677 430.87 L683 430.36 L689 429.84 L695 429.33 L701 428.82 L707 428.31 L713 427.80 L719 427.29 L725 426.73 L731 426.16 L737 425.59 L743 425.07 L749 424.64 L755 424.21 L761 423.88 L767 423.54 L773 423.21 L779 422.63 L785 422.05 L791 421.48 L797 420.90 L803 420.42 L809 420.05 L815 419.67 L821 419.29 L827 418.92 L833 418.54 L839 418.16 L845 417.79 L851 417.41 L857 417.00 L863 416.58 L869 416.17 L875 415.76 L881 415.35 L887 414.92 L893 414.50 L899 414.07 L905 413.64 L911 413.21 L917 412.21 L923 411.80 L929 411.38 L935 410.97 L941 410.55 L947 410.15 L953 409.77 L959 409.40 L965 408.96 L971 408.46 L977 407.96 L983 407.46 L989 407.07 L995 406.78 L1001 406.50 L1007 406.21 L1013 405.74 L1019 405.26 L1025 404.79 L1031 404.32 L1037 403.85 L1043 403.26 L1049 402.55 L1055 401.84 L1061 401.13 L1067 400.43 L1073 399.99 L1079 399.61 L1085 399.23 L1091 398.85 L1097 398.48 L1103 398.10 L1109 397.72 L1115 397.34 L1121 396.81 L1127 396.21 L1133 395.35 L1139 394.71 L1145 394.16 L1151 393.88 L1157 393.59 L1163 393.30 L1169 393.02 L1175 392.73 L1181 392.44 L1187 392.16 L1188 392.11" fill="none" stroke="#ff0000" stroke-width="1"/><path d="M5 577.23 L11 576.82 L17 576.32 L23 575.82 L29 575.32 L35 574.83 L41 574.33 L47 573.83 L53 573.33 L59 572.84 L65 572.34 L71 571.84 L77 571.34 L83 570.85 L89 570.35 L95 569.85 L101 569.36 L107 568.86 L113 568.36 L119 567.86 L125 567.39 L131 566.93 L137 566.46 L143 566.00 L149 565.53 L155 565.07 L161 564.60 L167 564.14 L173 563.67 L179 563.21 L185 562.74 L191 562.28 L197 561.81 L203 561.35 L209 560.88 L215 560.42 L221 559.95 L227 559.49 L233 559.02 L239 558.56 L245 558.09 L251 557.62 L257 557.15 L263 556.68 L269 556.21 L275 555.74 L281 555.27 L287 554.80 L293 554.33 L299 553.86 L305 553.41 L311 552.96 L317 552.51 L323 552.06 L329 551.61 L335 551.17 L341 550.72 L347 550.27 L353 549.82 L359 549.37 L365 548.92 L371 548.48 L377 548.03 L383 547.58 L389 547.20 L395 546.81 L401 546.43 L407 546.05 L413 545.67 L419 545.28 L425 544.90 L431 544.49 L437 543.92 L443 543.36 L449 542.79 L455 542.23 L461 541.67 L467 541.10 L473 540.54 L479 539.97 L485 539.64 L491 539.35 L497 539.07 L503 538.78 L509 537.92 L515 537.33 L521 536.78 L527 536.28 L533 535.78 L539 535.34 L545 534.90 L551 534.46 L557 534.02 L563 533.59 L569 533.15 L575 532.71 L581 532.27 L587 531.83 L593 531.39 L599 530.95 L605 530.55 L611 530.15 L617 529.75 L623 529.35 L629 528.95 L635 528.55 L641 528.15 L647 527.75 L653 527.35 L659 526.95 L665 526.45 L671 525.94 L677 525.43 L683 524.92 L689 524.41 L695 523.90 L701 523.39 L707 522.88 L713 522.38 L719 521.87 L725 521.30 L731 520.73 L737 520.16 L743 519.64 L749 519.21 L755 518.78 L761 518.45 L767 518.11 L773 517.78 L779 517.20 L785 516.62 L791 516.05 L797 515.47 L803 514.99 L809 514.62 L815 514.24 L821 513.86 L827 513.49 L833 513.11 L839 512.73 L845 512.36 L851 511.98 L857 511.57 L863 511.15 L869 510.74 L875 510.33 L881 509.92 L887 509.49 L893 509.07 L899 508.64 L905 508.21 L911 507.78 L917 506.78 L923 506.37 L929 505.95 L935 505.54 L941 505.12 L947 504.72 L953 504.34 L959 503.97 L965 503.53 L971 503.03 L977 502.53 L983 502.03 L989 501.64 L995 501.35 L1001 501.07 L1007 500.78 L1013 500.31 L1019 499.83 L1025 499.36 L1031 498.89 L1037 498.42 L1043 497.83 L1049 497.12 L1055 496.41 L1061 495.70 L1067 495.00 L1073 494.56 L1079 494.18 L1085 493.80 L1091 493.42 L1097 493.05 L1103 492.67 L1109 492.29 L1115 491.91 L1121 491.38 L1127 490.78 L1133 489.92 L1139 489.28 L1145 488.73 L1151 488.45 L1157 488.16 L1163 487.87 L1169 487.59 L1175 487.30 L1181 487.01 L1187 486.73 L1188 486.68" fill="none" stroke="#ff0000" stroke-width="1"/><path d="M5 671.80 L11 671.39 L17 670.89 L23 670.39 L29 669.89 L35 669.40 L41 668.90 L47 668.40 L53 667.90 L59 667.41 L65 666.91 L71 666.41 L77 665.91 L83 665.42 L89 664.92 L95 664.42 L101 663.92 L107 663.43 L113 662.93 L119 662.43 L125 661.96 L131 661.50 L137 661.03 L143 660.57 L149 660.10 L155 659.64 L161 659.17 L167 658.71 L173 658.24 L179 657.78 L185 657.31 L191 656.85 L197 656.38 L203 655.92 L209 655.45 L215 654.99 L221 654.52 L227 654.06 L233 653.59 L239 653.13 L245 652.66 L251 652.19 L257 651.72 L263 651.25 L269 650.78 L275 650.31 L281 649.84 L287 649.37 L293 648.90 L299 648.43 L305 647.98 L311 647.53 L317 647.08 L323 646.63 L329 646.18 L335 645.74 L341 645.29 L347 644.84 L353 644.39 L359 643.94 L365 643.49 L371 643.05 L377 642.60 L383 642.15 L389 641.77 L395 641.38 L401 641.00 L407 640.62 L413 640.24 L419 639.85 L425 639.47 L431 639.06 L437 638.49 L443 637.93 L449 637.36 L455 636.80 L461 636.24 L467 635.67 L473 635.11 L479 634.54 L485 634.21 L491 633.92 L497 633.64 L503 633.35 L509 632.49 L515 631.90 L521 631.35 L527 630.85 L533 630.35 L539 629.91 L545 629.47 L551 629.03 L557 628.59 L563 628.16 L569 627.72 L575 627.28 L581 626.84 L587 626.40 L593 625.96 L599 625.52 L605 625.12 L611 624.72 L617 624.32 L623 623.92 L629 623.52 L635 623.12 L641 622.72 L647 622.32 L653 621.92 L659 621.52 L665 621.02 L671 620.51 L677 620.00 L683 619.50 L689 618.98 L695 618.47 L701 617.96 L707 617.45 L713 616.94 L719 616.43 L725 615.87 L731 615.30 L737 614.73 L743 614.21 L749 613.78 L755 613.35 L761 613.02 L767 612.68 L773 612.35 L779 611.77 L785 611.19 L791 610.62 L797 610.04 L803 609.56 L809 609.19 L815 608.81 L821 608.43 L827 608.06 L833 607.68 L839 607.30 L845 606.93 L851 606.55 L857 606.14 L863 605.72 L869 605.31 L875 604.90 L881 604.49 L887 604.06 L893 603.64 L899 603.21 L905 602.78 L911 602.35 L917 601.35 L923 600.94 L929 600.52 L935 600.11 L941 599.69 L947 599.29 L953 598.91 L959 598.54 L965 598.10 L971 597.60 L977 597.10 L983 596.60 L989 596.21 L995 595.92 L1001 595.64 L1007 595.35 L1013 594.88 L1019 594.40 L1025 593.93 L1031 593.46 L1037 592.99 L1043 592.40 L1049 591.69 L1055 590.98 L1061 590.27 L1067 589.57 L1073 589.13 L1079 588.75 L1085 588.37 L1091 587.99 L1097 587.62 L1103 587.24 L1109 586.86 L1115 586.48 L1121 585.95 L1127 585.35 L1133 584.49 L1139 583.85 L1145 583.30 L1151 583.02 L1157 582.73 L1163 582.44 L1169 582.16 L1175 581.87 L1181 581.58 L1187 581.30 L1188 581.25" fill="none" stroke="#ff0000" stroke-width="1"/></g><g clip-path="url(#cp)"><rect x="76" y="163" width="3" height="53" fill="#80ffff"/><rect x="77" y="162" width="1" height="55" fill="#80ffff"/><rect x="72" y="214" width="5" height="3" fill="#80ffff"/><rect x="71" y="215" width="1" height="1" fill="#80ffff"/><rect x="78" y="178" width="5" height="3" fill="#80ffff"/><rect x="83" y="179" width="1" height="1" fill="#80ffff"/><circle cx="77.5" cy="155" r="1.95" fill="#80ffff" shape-rendering="auto"/><rect x="196" y="110" width="3" height="44" fill="#80ff80"/><rect x="197" y="109" width="1" height="46" fill="#80ff80"/><rect x="192" y="151" width="5" height="3" fill="#80ff80"/><rect x="191" y="152" width="1" height="1" fill="#80ff80"/><rect x="198" y="118" width="5" height="3" fill="#80ff80"/><rect x="203" y="119" width="1" height="1" fill="#80ff80"/><rect x="196" y="110" width="2" height="44" fill="#ff00ff"/><rect x="192" y="151" width="5" height="2" fill="#ff00ff"/><rect x="198" y="118" width="5" height="2" fill="#ff00ff"/><circle cx="197.5" cy="101.5" r="2.2" fill="none" stroke="#80ff80" stroke-width="1.05" shape-rendering="auto"/><rect x="195.5" y="91.5" width="4" height="4" fill="none" stroke="#ff00ff" stroke-width="1"/><rect x="328" y="207" width="3" height="58" fill="#80ffff"/><rect x="329" y="206" width="1" height="60" fill="#80ffff"/><rect x="324" y="206" width="5" height="3" fill="#80ffff"/><rect x="323" y="207" width="1" height="1" fill="#80ffff"/><rect x="330" y="239" width="5" height="3" fill="#80ffff"/><rect x="335" y="240" width="1" height="1" fill="#80ffff"/><rect x="328" y="207" width="2" height="58" fill="#ffffff"/><rect x="324" y="206" width="5" height="2" fill="#ffffff"/><rect x="330" y="239" width="5" height="2" fill="#ffffff"/><circle cx="329.5" cy="199" r="1.95" fill="#80ffff" shape-rendering="auto"/><rect x="327.5" y="189.5" width="4" height="4" fill="none" stroke="#ffffff" stroke-width="1"/><rect x="460" y="167" width="3" height="27" fill="#80ff80"/><rect x="461" y="166" width="1" height="29" fill="#80ff80"/><rect x="456" y="169" width="5" height="3" fill="#80ff80"/><rect x="455" y="170" width="1" height="1" fill="#80ff80"/><rect x="462" y="176" width="5" height="3" fill="#80ff80"/><rect x="467" y="177" width="1" height="1" fill="#80ff80"/><circle cx="461.5" cy="159.5" r="2.2" fill="none" stroke="#80ff80" stroke-width="1.05" shape-rendering="auto"/><rect x="580" y="192" width="3" height="18" fill="#80ffff"/><rect x="581" y="191" width="1" height="20" fill="#80ffff"/><rect x="576" y="196" width="5" height="3" fill="#80ffff"/><rect x="575" y="197" width="1" height="1" fill="#80ffff"/><rect x="582" y="197" width="5" height="3" fill="#80ffff"/><rect x="587" y="198" width="1" height="1" fill="#80ffff"/><circle cx="581.5" cy="183" r="1.95" fill="#80ffff" shape-rendering="auto"/><rect x="700" y="268" width="3" height="38" fill="#80ff80"/><rect x="701" y="267" width="1" height="40" fill="#80ff80"/><rect x="696" y="274" width="5" height="3" fill="#80ff80"/><rect x="695" y="275" width="1" height="1" fill="#80ff80"/><rect x="702" y="286" width="5" height="3" fill="#80ff80"/><rect x="707" y="287" width="1" height="1" fill="#80ff80"/><circle cx="701.5" cy="260.5" r="2.2" fill="none" stroke="#80ff80" stroke-width="1.05" shape-rendering="auto"/><rect x="832" y="345" width="3" height="27" fill="#80ffff"/><rect x="833" y="344" width="1" height="29" fill="#80ffff"/><rect x="828" y="346" width="5" height="3" fill="#80ffff"/><rect x="827" y="347" width="1" height="1" fill="#80ffff"/><rect x="834" y="355" width="5" height="3" fill="#80ffff"/><rect x="839" y="356" width="1" height="1" fill="#80ffff"/><circle cx="833.5" cy="337" r="1.95" fill="#80ffff" shape-rendering="auto"/><rect x="964" y="496" width="3" height="76" fill="#80ff80"/><rect x="965" y="495" width="1" height="78" fill="#80ff80"/><rect x="960" y="510" width="5" height="3" fill="#80ff80"/><rect x="959" y="511" width="1" height="1" fill="#80ff80"/><rect x="966" y="535" width="5" height="3" fill="#80ff80"/><rect x="971" y="536" width="1" height="1" fill="#80ff80"/><circle cx="965.5" cy="487.5" r="2.2" fill="none" stroke="#80ff80" stroke-width="1.05" shape-rendering="auto"/><rect x="1060" y="422" width="3" height="37" fill="#80ffff"/><rect x="1061" y="421" width="1" height="39" fill="#80ffff"/><rect x="1056" y="456" width="5" height="3" fill="#80ffff"/><rect x="1055" y="457" width="1" height="1" fill="#80ffff"/><rect x="1062" y="432" width="5" height="3" fill="#80ffff"/><rect x="1067" y="433" width="1" height="1" fill="#80ffff"/><circle cx="1061.5" cy="414" r="1.95" fill="#80ffff" shape-rendering="auto"/><rect x="1180" y="496" width="3" height="76" fill="#80ff80"/><rect x="1181" y="495" width="1" height="78" fill="#80ff80"/><rect x="1176" y="510" width="5" height="3" fill="#80ff80"/><rect x="1175" y="511" width="1" height="1" fill="#80ff80"/><rect x="1182" y="535" width="5" height="3" fill="#80ff80"/><rect x="1187" y="536" width="1" height="1" fill="#80ff80"/><circle cx="1181.5" cy="487.5" r="2.2" fill="none" stroke="#80ff80" stroke-width="1.05" shape-rendering="auto"/></g><rect x="3" y="3" width="1186" height="1" fill="#fff"/><rect x="3" y="627" width="1186" height="1" fill="#fff"/><rect x="3" y="3" width="1" height="625" fill="#fff"/><rect x="1188" y="3" width="1" height="625" fill="#fff"/><rect x="13" y="626" width="2" height="1" fill="#868686"/><rect x="23" y="626" width="2" height="1" fill="#868686"/><rect x="33" y="626" width="2" height="1" fill="#868686"/><rect x="43" y="626" width="2" height="1" fill="#868686"/><rect x="53" y="626" width="2" height="1" fill="#868686"/><rect x="63" y="626" width="2" height="1" fill="#868686"/><rect x="73" y="626" width="2" height="1" fill="#868686"/><rect x="83" y="626" width="2" height="1" fill="#868686"/><rect x="93" y="626" width="2" height="1" fill="#868686"/><rect x="103" y="626" width="2" height="1" fill="#868686"/><rect x="113" y="626" width="2" height="1" fill="#868686"/><rect x="123" y="626" width="2" height="1" fill="#868686"/><rect x="133" y="626" width="2" height="1" fill="#868686"/><rect x="143" y="626" width="2" height="1" fill="#868686"/><rect x="153" y="626" width="2" height="1" fill="#868686"/><rect x="163" y="626" width="2" height="1" fill="#868686"/><rect x="173" y="626" width="2" height="1" fill="#868686"/><rect x="183" y="626" width="2" height="1" fill="#868686"/><rect x="193" y="626" width="2" height="1" fill="#868686"/><rect x="203" y="626" width="2" height="1" fill="#868686"/><rect x="213" y="626" width="2" height="1" fill="#868686"/><rect x="223" y="626" width="2" height="1" fill="#868686"/><rect x="233" y="626" width="2" height="1" fill="#868686"/><rect x="243" y="626" width="2" height="1" fill="#868686"/><rect x="253" y="626" width="2" height="1" fill="#868686"/><rect x="263" y="626" width="2" height="1" fill="#868686"/><rect x="273" y="626" width="2" height="1" fill="#868686"/><rect x="283" y="626" width="2" height="1" fill="#868686"/><rect x="293" y="626" width="2" height="1" fill="#868686"/><rect x="303" y="626" width="2" height="1" fill="#868686"/><rect x="313" y="626" width="2" height="1" fill="#868686"/><rect x="323" y="626" width="2" height="1" fill="#868686"/><rect x="333" y="626" width="2" height="1" fill="#868686"/><rect x="343" y="626" width="2" height="1" fill="#868686"/><rect x="353" y="626" width="2" height="1" fill="#868686"/><rect x="363" y="626" width="2" height="1" fill="#868686"/><rect x="373" y="626" width="2" height="1" fill="#868686"/><rect x="383" y="626" width="2" height="1" fill="#868686"/><rect x="393" y="626" width="2" height="1" fill="#868686"/><rect x="403" y="626" width="2" height="1" fill="#868686"/><rect x="413" y="626" width="2" height="1" fill="#868686"/><rect x="423" y="626" width="2" height="1" fill="#868686"/><rect x="433" y="626" width="2" height="1" fill="#868686"/><rect x="443" y="626" width="2" height="1" fill="#868686"/><rect x="453" y="626" width="2" height="1" fill="#868686"/><rect x="463" y="626" width="2" height="1" fill="#868686"/><rect x="473" y="626" width="2" height="1" fill="#868686"/><rect x="483" y="626" width="2" height="1" fill="#868686"/><rect x="493" y="626" width="2" height="1" fill="#868686"/><rect x="503" y="626" width="2" height="1" fill="#868686"/><rect x="513" y="626" width="2" height="1" fill="#868686"/><rect x="523" y="626" width="2" height="1" fill="#868686"/><rect x="533" y="626" width="2" height="1" fill="#868686"/><rect x="543" y="626" width="2" height="1" fill="#868686"/><rect x="553" y="626" width="2" height="1" fill="#868686"/><rect x="563" y="626" width="2" height="1" fill="#868686"/><rect x="573" y="626" width="2" height="1" fill="#868686"/><rect x="583" y="626" width="2" height="1" fill="#868686"/><rect x="593" y="626" width="2" height="1" fill="#868686"/><rect x="603" y="626" width="2" height="1" fill="#868686"/><rect x="613" y="626" width="2" height="1" fill="#868686"/><rect x="623" y="626" width="2" height="1" fill="#868686"/><rect x="633" y="626" width="2" height="1" fill="#868686"/><rect x="643" y="626" width="2" height="1" fill="#868686"/><rect x="653" y="626" width="2" height="1" fill="#868686"/><rect x="663" y="626" width="2" height="1" fill="#868686"/><rect x="673" y="626" width="2" height="1" fill="#868686"/><rect x="683" y="626" width="2" height="1" fill="#868686"/><rect x="693" y="626" width="2" height="1" fill="#868686"/><rect x="703" y="626" width="2" height="1" fill="#868686"/><rect x="713" y="626" width="2" height="1" fill="#868686"/><rect x="723" y="626" width="2" height="1" fill="#868686"/><rect x="733" y="626" width="2" height="1" fill="#868686"/><rect x="743" y="626" width="2" height="1" fill="#868686"/><rect x="753" y="626" width="2" height="1" fill="#868686"/><rect x="763" y="626" width="2" height="1" fill="#868686"/><rect x="773" y="626" width="2" height="1" fill="#868686"/><rect x="783" y="626" width="2" height="1" fill="#868686"/><rect x="793" y="626" width="2" height="1" fill="#868686"/><rect x="803" y="626" width="2" height="1" fill="#868686"/><rect x="813" y="626" width="2" height="1" fill="#868686"/><rect x="823" y="626" width="2" height="1" fill="#868686"/><rect x="833" y="626" width="2" height="1" fill="#868686"/><rect x="843" y="626" width="2" height="1" fill="#868686"/><rect x="853" y="626" width="2" height="1" fill="#868686"/><rect x="863" y="626" width="2" height="1" fill="#868686"/><rect x="873" y="626" width="2" height="1" fill="#868686"/><rect x="883" y="626" width="2" height="1" fill="#868686"/><rect x="893" y="626" width="2" height="1" fill="#868686"/><rect x="903" y="626" width="2" height="1" fill="#868686"/><rect x="913" y="626" width="2" height="1" fill="#868686"/><rect x="923" y="626" width="2" height="1" fill="#868686"/><rect x="933" y="626" width="2" height="1" fill="#868686"/><rect x="943" y="626" width="2" height="1" fill="#868686"/><rect x="953" y="626" width="2" height="1" fill="#868686"/><rect x="963" y="626" width="2" height="1" fill="#868686"/><rect x="973" y="626" width="2" height="1" fill="#868686"/><rect x="983" y="626" width="2" height="1" fill="#868686"/><rect x="993" y="626" width="2" height="1" fill="#868686"/><rect x="1003" y="626" width="2" height="1" fill="#868686"/><rect x="1013" y="626" width="2" height="1" fill="#868686"/><rect x="1023" y="626" width="2" height="1" fill="#868686"/><rect x="1033" y="626" width="2" height="1" fill="#868686"/><rect x="1043" y="626" width="2" height="1" fill="#868686"/><rect x="1053" y="626" width="2" height="1" fill="#868686"/><rect x="1063" y="626" width="2" height="1" fill="#868686"/><rect x="1073" y="626" width="2" height="1" fill="#868686"/><rect x="1083" y="626" width="2" height="1" fill="#868686"/><rect x="1093" y="626" width="2" height="1" fill="#868686"/><rect x="1103" y="626" width="2" height="1" fill="#868686"/><rect x="1113" y="626" width="2" height="1" fill="#868686"/><rect x="1123" y="626" width="2" height="1" fill="#868686"/><rect x="1133" y="626" width="2" height="1" fill="#868686"/><rect x="1143" y="626" width="2" height="1" fill="#868686"/><rect x="1153" y="626" width="2" height="1" fill="#868686"/><rect x="1163" y="626" width="2" height="1" fill="#868686"/><rect x="1173" y="626" width="2" height="1" fill="#868686"/><rect x="1179" y="619" width="9" height="8" fill="#00ff00"/><rect x="1179" y="309" width="9" height="13" fill="#008000"/><rect x="1180" y="310" width="7" height="11" fill="#fff"/><circle cx="1183.5" cy="315.5" r="3" fill="#fff" stroke="#000" stroke-width="1" shape-rendering="auto"/><rect x="1108" y="625" width="4" height="6" fill="#ffff00"/><rect x="1190" y="101" width="4" height="1" fill="#c0c0c0"/><text x="1200" y="104" class="ax">2200</text><rect x="1190" y="206" width="4" height="1" fill="#c0c0c0"/><text x="1200" y="209" class="ax">2100</text><rect x="1190" y="311" width="4" height="1" fill="#c0c0c0"/><text x="1200" y="314" class="ax">2000</text><rect x="1190" y="417" width="4" height="1" fill="#c0c0c0"/><text x="1200" y="420" class="ax">1900</text><rect x="1190" y="522" width="4" height="1" fill="#c0c0c0"/><text x="1200" y="525" class="ax">1800</text><rect x="1190" y="627" width="4" height="1" fill="#c0c0c0"/><text x="1200" y="630" class="ax">1700</text><rect x="1190" y="453" width="31" height="14" fill="#fff"/><text x="1194.5" y="464" class="ax" fill="#000" style="fill:#000">1859</text><text x="23.5" y="641" class="ax" textLength="55.5" lengthAdjust="spacingAndGlyphs">2015-08-24</text><text x="143.5" y="641" class="ax" textLength="55.5" lengthAdjust="spacingAndGlyphs">2015-09-08</text><text x="263.5" y="641" class="ax" textLength="55.5" lengthAdjust="spacingAndGlyphs">2015-09-22</text><text x="383.5" y="641" class="ax" textLength="55.5" lengthAdjust="spacingAndGlyphs">2015-10-05</text><text x="503.5" y="641" class="ax" textLength="55.5" lengthAdjust="spacingAndGlyphs">2015-10-19</text><text x="623.5" y="641" class="ax" textLength="55.5" lengthAdjust="spacingAndGlyphs">2015-11-02</text><text x="731.5" y="641" class="ax" textLength="55.5" lengthAdjust="spacingAndGlyphs">2015-11-16</text><text x="851.5" y="641" class="ax" textLength="55.5" lengthAdjust="spacingAndGlyphs">2015-11-30</text><text x="971.5" y="641" class="ax" textLength="55.5" lengthAdjust="spacingAndGlyphs">2015-12-14</text><text x="1067.5" y="641" class="ax" textLength="55.5" lengthAdjust="spacingAndGlyphs">2015-12-28</text><text x="13.5" y="34" class="ax" style="fill:#ff0000" textLength="148.5" lengthAdjust="spacingAndGlyphs">[005] Mars Price Line G 90 N -1</text><text x="13.5" y="52" class="ax" style="fill:#80ffff" textLength="71" lengthAdjust="spacingAndGlyphs">[004] Full Moon</text><text x="13.5" y="66" class="ax" style="fill:#80ff80" textLength="78" lengthAdjust="spacingAndGlyphs">[003] New Moon</text><text x="13.5" y="80" class="ax" style="fill:#ffffff" textLength="91.5" lengthAdjust="spacingAndGlyphs">[005] Lunar Eclipse</text><text x="13.5" y="94" class="ax" style="fill:#ff00ff" textLength="88.5" lengthAdjust="spacingAndGlyphs">[006] Solar Eclipse</text><circle cx="7" cy="48.5" r="2.2" fill="#80ffff" shape-rendering="auto"/><circle cx="7" cy="62.5" r="2" fill="none" stroke="#80ff80" shape-rendering="auto"/><rect x="5.5" y="74.5" width="4" height="4" fill="none" stroke="#fff"/><rect x="5.5" y="88.5" width="4" height="4" fill="none" stroke="#ff00ff"/></svg>
<div id="tf">TF</div>
<div id="win">
 <div id="redglow"></div>
 <div id="glow"></div>
 <svg id="ico" viewBox="0 0 15 15"><circle cx="7.5" cy="7.5" r="7" fill="#000"/><path d="M6.2 1.2A6.6 6.6 0 0 0 6.2 13.8A8.2 8.2 0 0 1 6.2 1.2Z" fill="#f4f07a" stroke="#f4f07a" stroke-width=".6"/></svg>
 <div id="title">Aspects Research</div>
 <div id="btns"><div id="bmin"><svg width="24" height="16"><rect x="7.5" y="8.5" width="9" height="3" fill="#fff" stroke="#444" stroke-width="1"/></svg></div><div id="bmax"><svg width="24" height="16"><rect x="8" y="4.500" width="8" height="6" fill="none" stroke="#444" stroke-width="3"/><rect x="8" y="4.500" width="8" height="6" fill="none" stroke="#fff" stroke-width="1.5"/></svg></div><div id="bcls"><svg width="42" height="16"><path d="M17 4.500L24 11.500M24 4.500L17 11.500" stroke="#444" stroke-width="4.200"/><path d="M17 4.500L24 11.500M24 4.500L17 11.500" stroke="#fff" stroke-width="2.600"/></svg></div></div>
 <div id="client">
  <div id="menu"><span style="left:7px">File</span><span style="left:39px">Options</span></div>
  <div id="lbl" class="msb" style="left:8px;top:20px;width:234px;height:13px"><b>Aspects for 01-10-16</b></div>
  <div id="list" class="msb" style="left:5px;top:37px;width:291px;height:159px"><b style="left:2px;top:1px">New Moon</b></div>
  <div id="cal" style="left:300px;top:36px;width:185px;height:161px">
   <div class="cb ms" style="left:0;top:0;width:96px;height:17px;padding-left:1px"><b>January</b></div><div class="dd" style="left:96px;top:0;width:13px;height:17px"></div>
   <div class="cb ms" style="left:110px;top:0;width:60px;height:17px;padding-left:0px;border-left:1px solid #fff"><b>2016</b></div><div class="dd" style="left:170px;top:0;width:13px;height:17px"></div>
   <div style="left:0;top:17px;width:183px;height:1px;background:#a0a0a0"></div>
  </div>
  <div class="ms" style="left:0;top:0"><div class="dh" style="left:301px;top:55px;width:27px;height:19px"><b>Sun</b></div><div class="dh" style="left:327px;top:55px;width:27px;height:19px"><b>Mon</b></div><div class="dh" style="left:353px;top:55px;width:27px;height:19px"><b>Tue</b></div><div class="dh" style="left:379px;top:55px;width:27px;height:19px"><b>Wed</b></div><div class="dh" style="left:405px;top:55px;width:27px;height:19px"><b>Thu</b></div><div class="dh" style="left:431px;top:55px;width:27px;height:19px"><b>Fri</b></div><div class="dh" style="left:457px;top:55px;width:27px;height:19px"><b>Sat</b></div><div class="dc g" style="left:301px;top:74px;width:28px;height:21px"><b>27</b></div><div class="dc g" style="left:329px;top:74px;width:26px;height:21px"><b>28</b></div><div class="dc g" style="left:355px;top:74px;width:26px;height:21px"><b>29</b></div><div class="dc g" style="left:381px;top:74px;width:26px;height:21px"><b>30</b></div><div class="dc g" style="left:407px;top:74px;width:26px;height:21px"><b>31</b></div><div class="dc n" style="left:433px;top:74px;width:26px;height:21px"><b>1</b></div><div class="dc n" style="left:459px;top:74px;width:26px;height:21px"><b>2</b></div><div class="dc n" style="left:301px;top:95px;width:28px;height:21px"><b>3</b></div><div class="dc n" style="left:329px;top:95px;width:26px;height:21px"><b>4</b></div><div class="dc n" style="left:355px;top:95px;width:26px;height:21px"><b>5</b></div><div class="dc n" style="left:381px;top:95px;width:26px;height:21px"><b>6</b></div><div class="dc n" style="left:407px;top:95px;width:26px;height:21px"><b>7</b></div><div class="dc n" style="left:433px;top:95px;width:26px;height:21px"><b>8</b></div><div class="dc n" style="left:459px;top:95px;width:26px;height:21px"><b>9</b></div><div class="dc s" style="left:301px;top:116px;width:27px;height:21px"><b>10</b></div><div class="dc n" style="left:329px;top:116px;width:26px;height:21px"><b>11</b></div><div class="dc n" style="left:355px;top:116px;width:26px;height:21px"><b>12</b></div><div class="dc n" style="left:381px;top:116px;width:26px;height:21px"><b>13</b></div><div class="dc n" style="left:407px;top:116px;width:26px;height:21px"><b>14</b></div><div class="dc n" style="left:433px;top:116px;width:26px;height:21px"><b>15</b></div><div class="dc n" style="left:459px;top:116px;width:26px;height:21px"><b>16</b></div><div class="dc n" style="left:301px;top:137px;width:28px;height:20px"><b>17</b></div><div class="dc n" style="left:329px;top:137px;width:26px;height:20px"><b>18</b></div><div class="dc n" style="left:355px;top:137px;width:26px;height:20px"><b>19</b></div><div class="dc n" style="left:381px;top:137px;width:26px;height:20px"><b>20</b></div><div class="dc n" style="left:407px;top:137px;width:26px;height:20px"><b>21</b></div><div class="dc n" style="left:433px;top:137px;width:26px;height:20px"><b>22</b></div><div class="dc n" style="left:459px;top:137px;width:26px;height:20px"><b>23</b></div><div class="dc n" style="left:301px;top:157px;width:28px;height:20px"><b>24</b></div><div class="dc n" style="left:329px;top:157px;width:26px;height:20px"><b>25</b></div><div class="dc n" style="left:355px;top:157px;width:26px;height:20px"><b>26</b></div><div class="dc n" style="left:381px;top:157px;width:26px;height:20px"><b>27</b></div><div class="dc n" style="left:407px;top:157px;width:26px;height:20px"><b>28</b></div><div class="dc n" style="left:433px;top:157px;width:26px;height:20px"><b>29</b></div><div class="dc n" style="left:459px;top:157px;width:26px;height:20px"><b>30</b></div><div class="dc n" style="left:301px;top:177px;width:28px;height:20px"><b>31</b></div><div class="dc g" style="left:329px;top:177px;width:26px;height:20px"><b>1</b></div><div class="dc g" style="left:355px;top:177px;width:26px;height:20px"><b>2</b></div><div class="dc g" style="left:381px;top:177px;width:26px;height:20px"><b>3</b></div><div class="dc g" style="left:407px;top:177px;width:26px;height:20px"><b>4</b></div><div class="dc g" style="left:433px;top:177px;width:26px;height:20px"><b>5</b></div><div class="dc g" style="left:459px;top:177px;width:26px;height:20px"><b>6</b></div></div>
  <div class="rb ms" style="left:330px;top:204px;width:51px;height:15px"><i class="on"></i><b>Geo</b></div>
  <div class="rb ms" style="left:416px;top:204px;width:50px;height:15px"><i></i><b>Helio</b></div>
  <div class="btn msb" style="left:10px;top:212px;width:56px;height:27px">Month</div>
  <div class="btn msb" style="left:70px;top:212px;width:56px;height:27px">Options</div>
 </div>
</div>
</body></html>
